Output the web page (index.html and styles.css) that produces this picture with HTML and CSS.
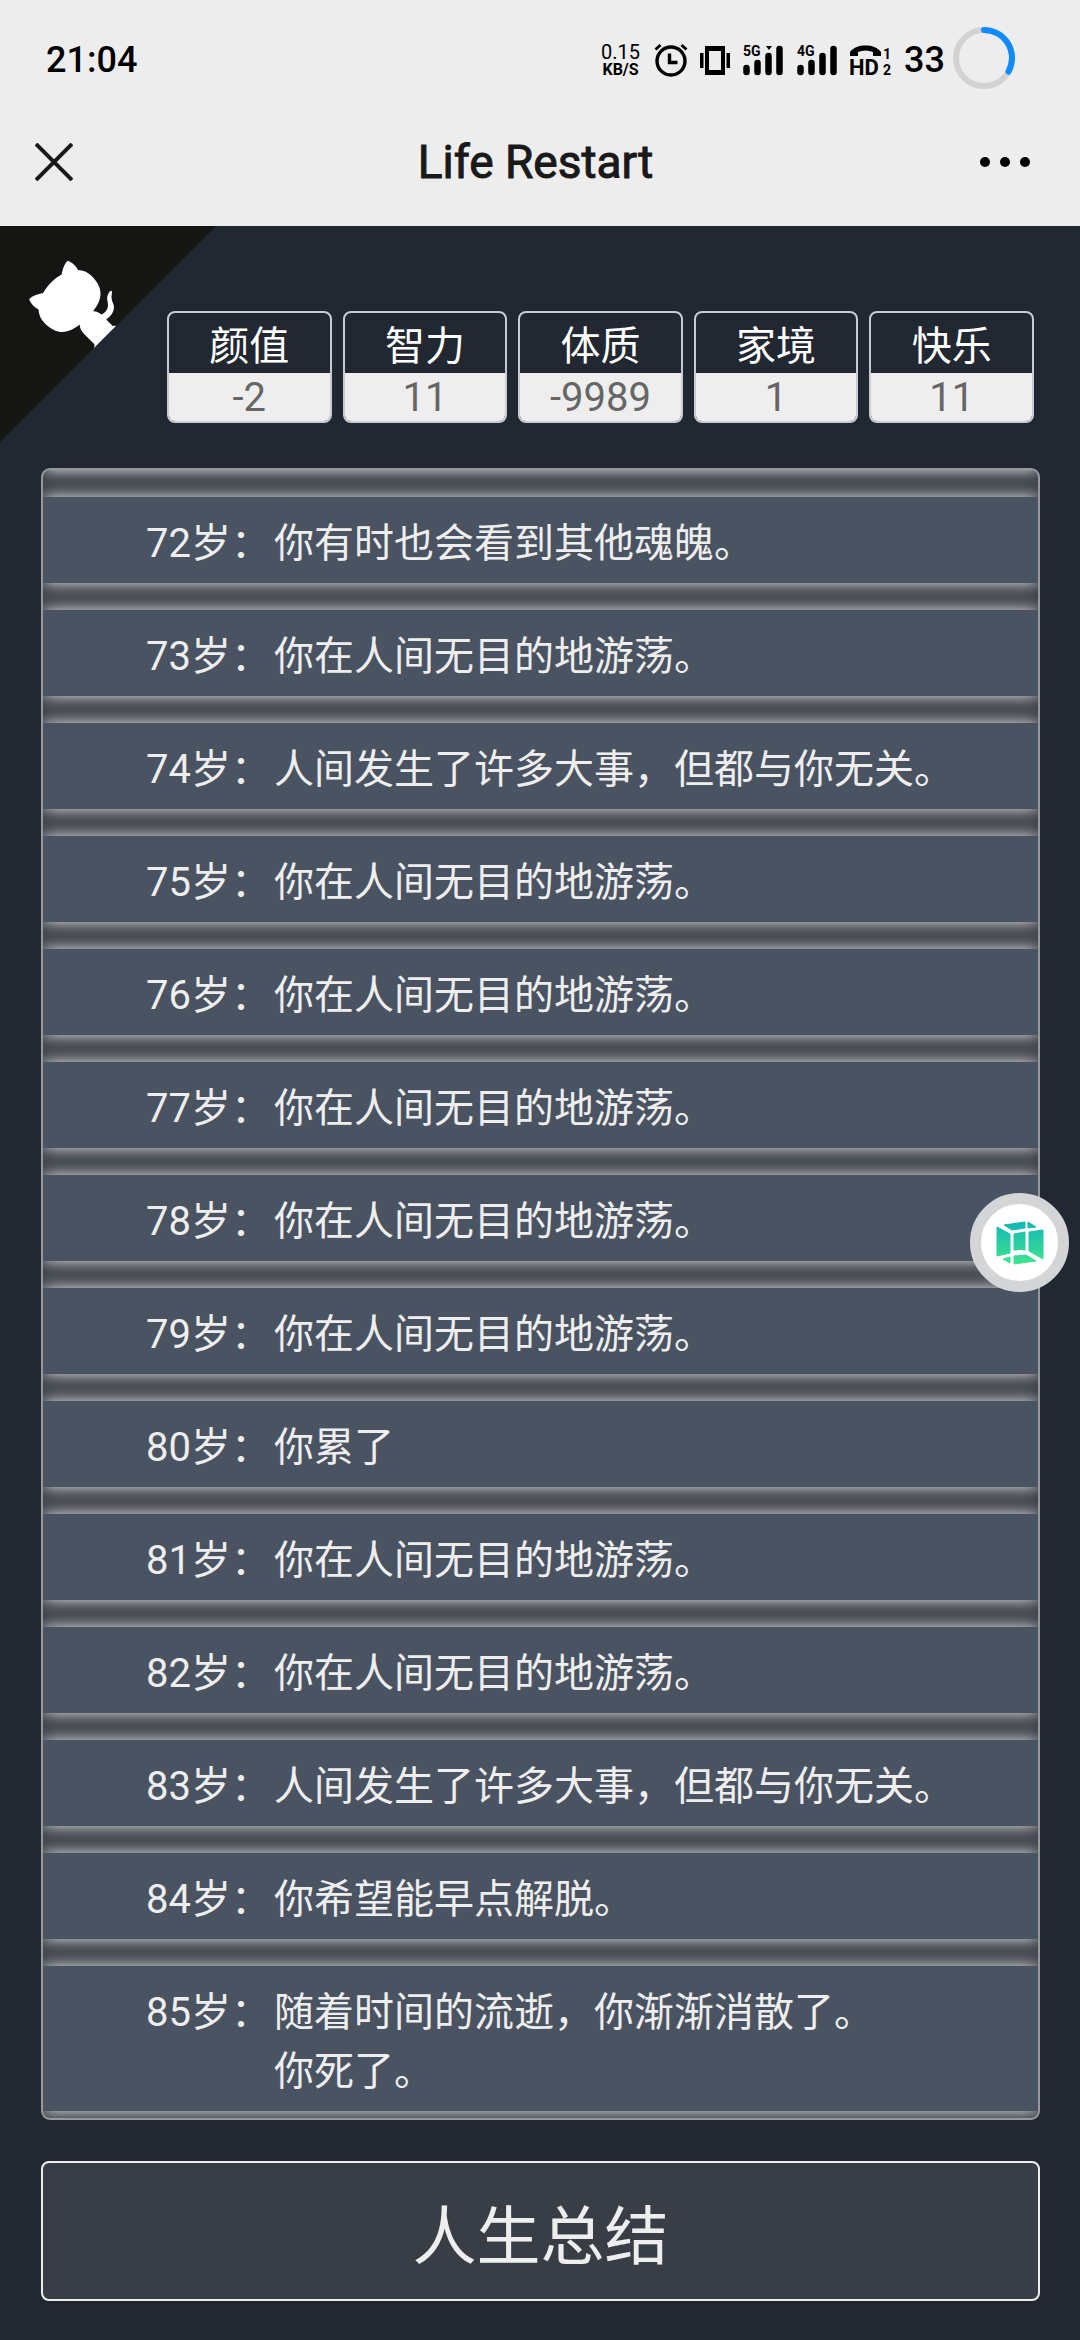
FILE: index.html
```
<!DOCTYPE html>
<html lang="zh-CN">
<head>
  <meta charset="UTF-8">
  <meta name="viewport" content="width=device-width, initial-scale=1">
  <title>Life Restart</title>
  <link rel="stylesheet" href="styles.css">
</head>
<body>
<header class="topBar">
  <div class="statusBar">
    <span class="clock">21:04</span>
    <div class="statusIcons">
      <div class="netSpeed"><span>0.15</span><b>KB/S</b></div>
      <!-- sveglia -->
      <svg class="icon" width="34" height="34" viewBox="0 0 34 34" fill="none" stroke="#000">
        <circle cx="17" cy="18" r="14" stroke-width="3.4"/>
        <path d="M15.5 10.5v9h8" stroke-width="3.4"/>
        <path d="M1.5 6.5l5-4.5M32.5 6.5l-5-4.5" stroke-width="3"/>
      </svg>
      <!-- vibrazione -->
      <svg class="icon" width="34" height="34" viewBox="0 0 34 34">
        <path d="M7 3h20v29H7zM11 8v19h12V8z" fill-rule="evenodd"/>
        <path d="M2 10h3.5v15H2zM28.5 10H32v15h-3.5z"/>
      </svg>
      <!-- segnale 5G e 4G -->
      <svg class="icon" width="44" height="34" viewBox="0 0 44 34">
        <text class="netLabel" x="1" y="13">5G</text>
        <path d="M24 3h6l-3 4z"/>
        <path d="M4.5 25v4M15.5 20v9M26.5 13v16M37.5 6v23" stroke="#000" stroke-width="6.5" stroke-linecap="round"/>
      </svg>
      <svg class="icon" width="44" height="34" viewBox="0 0 44 34">
        <text class="netLabel" x="1" y="13">4G</text>
        <path d="M4.5 25v4M15.5 20v9M26.5 13v16M37.5 6v23" stroke="#000" stroke-width="6.5" stroke-linecap="round"/>
      </svg>
      <!-- chiamata HD -->
      <svg class="icon" width="44" height="34" viewBox="0 0 44 34">
        <path d="M0 13V9C4 4 9 2.5 15.500 2.500S27 4 31 9v4h-8V9c-5-2-10-2-15 0v4z"/>
        <text class="hdLabel" x="-1" y="32">HD</text>
        <text class="simLabel" x="33" y="16">1</text>
        <text class="simLabel" x="33" y="32">2</text>
      </svg>
      <span class="battery">33</span>
      <svg class="ring" width="62" height="62" viewBox="0 0 62 62" fill="none" stroke-width="6">
        <circle cx="31" cy="31" r="28" stroke="#d2d2d2"/>
        <path d="M31 3a28 28 0 0 1 24.5 41.5" stroke="#0f8bff" stroke-linecap="round"/>
      </svg>
    </div>
  </div>
  <nav class="titleBar">
    <button class="navButton" aria-label="关闭">
      <svg width="38" height="38" viewBox="0 0 38 38" stroke="#191919" stroke-width="4">
        <path d="M1 1L37 37M37 1L1 37"/>
      </svg>
    </button>
    <h1>Life Restart</h1>
    <button class="navButton" aria-label="更多">
      <svg width="50" height="38" viewBox="0 0 50 38">
        <circle cx="5" cy="19" r="5"/><circle cx="25" cy="19" r="5"/><circle cx="45" cy="19" r="5"/>
      </svg>
    </button>
  </nav>
</header>

<main class="game">
  <a class="githubCorner" href="#" aria-label="GitHub">
    <svg viewBox="0 0 250 250">
      <g transform="matrix(-1 0 0 1 250 0)">
        <path fill="#151513" d="M0,0 L250,250 L250,0 Z"/>
        <path fill="#fff" d="M128.3,109.0 C113.8,99.7 119.0,89.6 119.0,89.6 C122.0,82.7 120.5,78.6 120.5,78.6 C119.2,72.0 123.4,76.3 123.4,76.3 C127.3,80.9 125.5,87.3 125.5,87.3 C122.9,97.6 130.6,101.9 134.4,103.2"/>
        <path fill="#fff" d="M115.0,115.0 C114.9,115.1 118.7,116.5 119.8,115.4 L133.7,101.6 C136.9,99.2 139.9,98.4 142.2,98.6 C133.8,88.0 127.5,74.4 143.8,58.0 C148.5,53.4 154.0,51.2 159.7,51.0 C160.3,49.4 163.2,43.6 171.4,40.1 C171.4,40.1 176.1,42.5 178.8,56.2 C183.1,58.6 187.2,61.8 190.9,65.4 C194.5,69.0 197.7,73.2 200.1,77.6 C213.8,80.2 216.3,84.9 216.3,84.9 C212.7,93.1 206.9,96.0 205.4,96.6 C205.1,102.4 203.0,107.8 198.3,112.5 C181.9,128.9 168.3,122.5 157.7,114.1 C157.9,116.9 156.7,120.9 152.7,124.9 L141.0,136.5 C139.8,137.7 141.6,141.9 141.8,141.8 Z"/>
      </g>
    </svg>
  </a>

  <ul class="property">
    <li><span class="name">颜值</span><span class="value">-2</span></li>
    <li><span class="name">智力</span><span class="value">11</span></li>
    <li><span class="name">体质</span><span class="value">-9989</span></li>
    <li><span class="name">家境</span><span class="value">1</span></li>
    <li><span class="name">快乐</span><span class="value">11</span></li>
  </ul>

  <ul class="lifeTrajectory">
    <li><span class="age">72岁：</span><span>你有时也会看到其他魂魄。</span></li>
    <li><span class="age">73岁：</span><span>你在人间无目的地游荡。</span></li>
    <li><span class="age">74岁：</span><span>人间发生了许多大事，但都与你无关。</span></li>
    <li><span class="age">75岁：</span><span>你在人间无目的地游荡。</span></li>
    <li><span class="age">76岁：</span><span>你在人间无目的地游荡。</span></li>
    <li><span class="age">77岁：</span><span>你在人间无目的地游荡。</span></li>
    <li><span class="age">78岁：</span><span>你在人间无目的地游荡。</span></li>
    <li><span class="age">79岁：</span><span>你在人间无目的地游荡。</span></li>
    <li><span class="age">80岁：</span><span>你累了</span></li>
    <li><span class="age">81岁：</span><span>你在人间无目的地游荡。</span></li>
    <li><span class="age">82岁：</span><span>你在人间无目的地游荡。</span></li>
    <li><span class="age">83岁：</span><span>人间发生了许多大事，但都与你无关。</span></li>
    <li><span class="age">84岁：</span><span>你希望能早点解脱。</span></li>
    <li><span class="age">85岁：</span><span>随着时间的流逝，你渐渐消散了。<br>你死了。</span></li>
  </ul>

  <button class="summary">人生总结</button>
</main>

<button class="floatBall" aria-label="悬浮球">
  <svg width="50" height="50" viewBox="0 0 50 50">
    <defs>
      <linearGradient id="cube" gradientUnits="userSpaceOnUse" x1="0" y1="3" x2="0" y2="47">
        <stop offset="0" stop-color="#12b5b8"/>
        <stop offset="1" stop-color="#40e68c"/>
      </linearGradient>
    </defs>
    <g fill="url(#cube)" stroke="url(#cube)" stroke-width="1" stroke-linejoin="round">
      <path d="M9 7L30 4V10L17 12z"/>
      <path d="M33 4L41 9L33 10z"/>
      <path d="M2 9L15 16V35L2 38z"/>
      <path d="M19 16L30 14V32H19z"/>
      <path d="M34 14L48 12V41L34 33z"/>
      <path d="M8 41L15 39V45z"/>
      <path d="M19 38L31 37L41 43L19 46z"/>
    </g>
    <path d="M22 33h6" stroke="#fff" stroke-width="2"/>
  </svg>
</button>
</body>
</html>
```

FILE: styles.css
```
* {
  box-sizing: border-box;
}

body {
  margin: 0;
  min-height: 100vh;
  display: flex;
  flex-direction: column;
  background-color: #222831;
  color: #eeeeee;
  font-family: Roboto, "Noto Sans CJK SC", sans-serif;
  font-size: 40px;
}

button {
  font-family: inherit;
  cursor: pointer;
}

ul {
  list-style: none;
  margin: 0;
  padding: 0;
}

/* Barra superiore */
.topBar {
  background-color: #ededed;
  color: #191919;
}

.statusBar {
  display: flex;
  justify-content: space-between;
  align-items: center;
  height: 116px;
  padding: 3px 65px 0 46px;
  color: #000;
}

.clock,
.battery {
  font-size: 36px;
  font-weight: 500;
}

.statusIcons {
  display: flex;
  align-items: center;
  gap: 10px;
}

.icon {
  overflow: visible;
}

.ring {
  margin: 0 0 4px -2px;
}

.netSpeed {
  display: flex;
  flex-direction: column;
  align-items: center;
  margin-right: 4px;
  font-size: 20px;
  line-height: 19px;
}

.netSpeed b {
  font-size: 16px;
  line-height: 15px;
}

.netLabel {
  font-size: 14px;
  font-weight: 700;
}

.hdLabel {
  font-size: 22px;
  font-weight: 700;
}

.simLabel {
  font-size: 14px;
  font-weight: 700;
}

.titleBar {
  display: flex;
  align-items: center;
  height: 110px;
  padding: 0 50px 18px 35px;
}

.titleBar h1 {
  flex: 1;
  margin: 0;
  padding-left: 6px;
  font-size: 46px;
  font-weight: 400;
  -webkit-text-stroke: 1px #191919;
  text-align: center;
}

.navButton {
  display: flex;
  min-width: 50px;
  padding: 0;
  border: none;
  background: none;
}

/* Gioco */
.game {
  position: relative;
  flex: 1;
  display: flex;
  flex-direction: column;
  padding: 85px 40px 39px 41px;
}

.githubCorner {
  position: absolute;
  top: 0;
  left: 0;
  width: 216px;
  height: 216px;
}

.githubCorner svg {
  display: block;
}

.property {
  display: flex;
  gap: 11px;
  margin: 0 6px 45px 126px;
}

.property li {
  flex: 1;
  display: flex;
  flex-direction: column;
  border: 2px solid #c8ccd2;
  border-radius: 8px;
  overflow: hidden;
  text-align: center;
}

.property .name {
  padding-top: 7px;
  color: #fff;
  line-height: 53px;
}

.property .value {
  padding-top: 2px;
  background-color: #eeeeee;
  color: #666;
  line-height: 46px;
}

.lifeTrajectory {
  flex: 1;
  display: flex;
  flex-direction: column;
  gap: 27px;
  border: 2px solid #96999c;
  border-radius: 9px;
  background-color: #393e46;
  overflow: hidden;
}

.lifeTrajectory li,
.lifeTrajectory::before {
  background-color: #4a5361;
  box-shadow: 0 0 16px #eeeeee;
}

/* Bordo luminoso sopra la prima riga */
.lifeTrajectory::before {
  content: '';
  height: 20px;
  margin-top: -20px;
}

.lifeTrajectory li {
  display: flex;
  padding: 17px 60px 10px 103px;
  line-height: 59px;
}

.age {
  width: 128px;
}

.summary {
  height: 140px;
  margin-top: 41px;
  border: 2px solid #eeeeee;
  border-radius: 8px;
  background-color: #393e46;
  color: #eeeeee;
  font-size: 64px;
}

/* Pallina flottante */
.floatBall {
  position: fixed;
  top: 1193px;
  right: 11px;
  width: 99px;
  height: 99px;
  display: flex;
  justify-content: center;
  align-items: center;
  padding: 0;
  border: 11px solid #d4d5d7;
  border-radius: 50%;
  background-color: #fff;
}
```
